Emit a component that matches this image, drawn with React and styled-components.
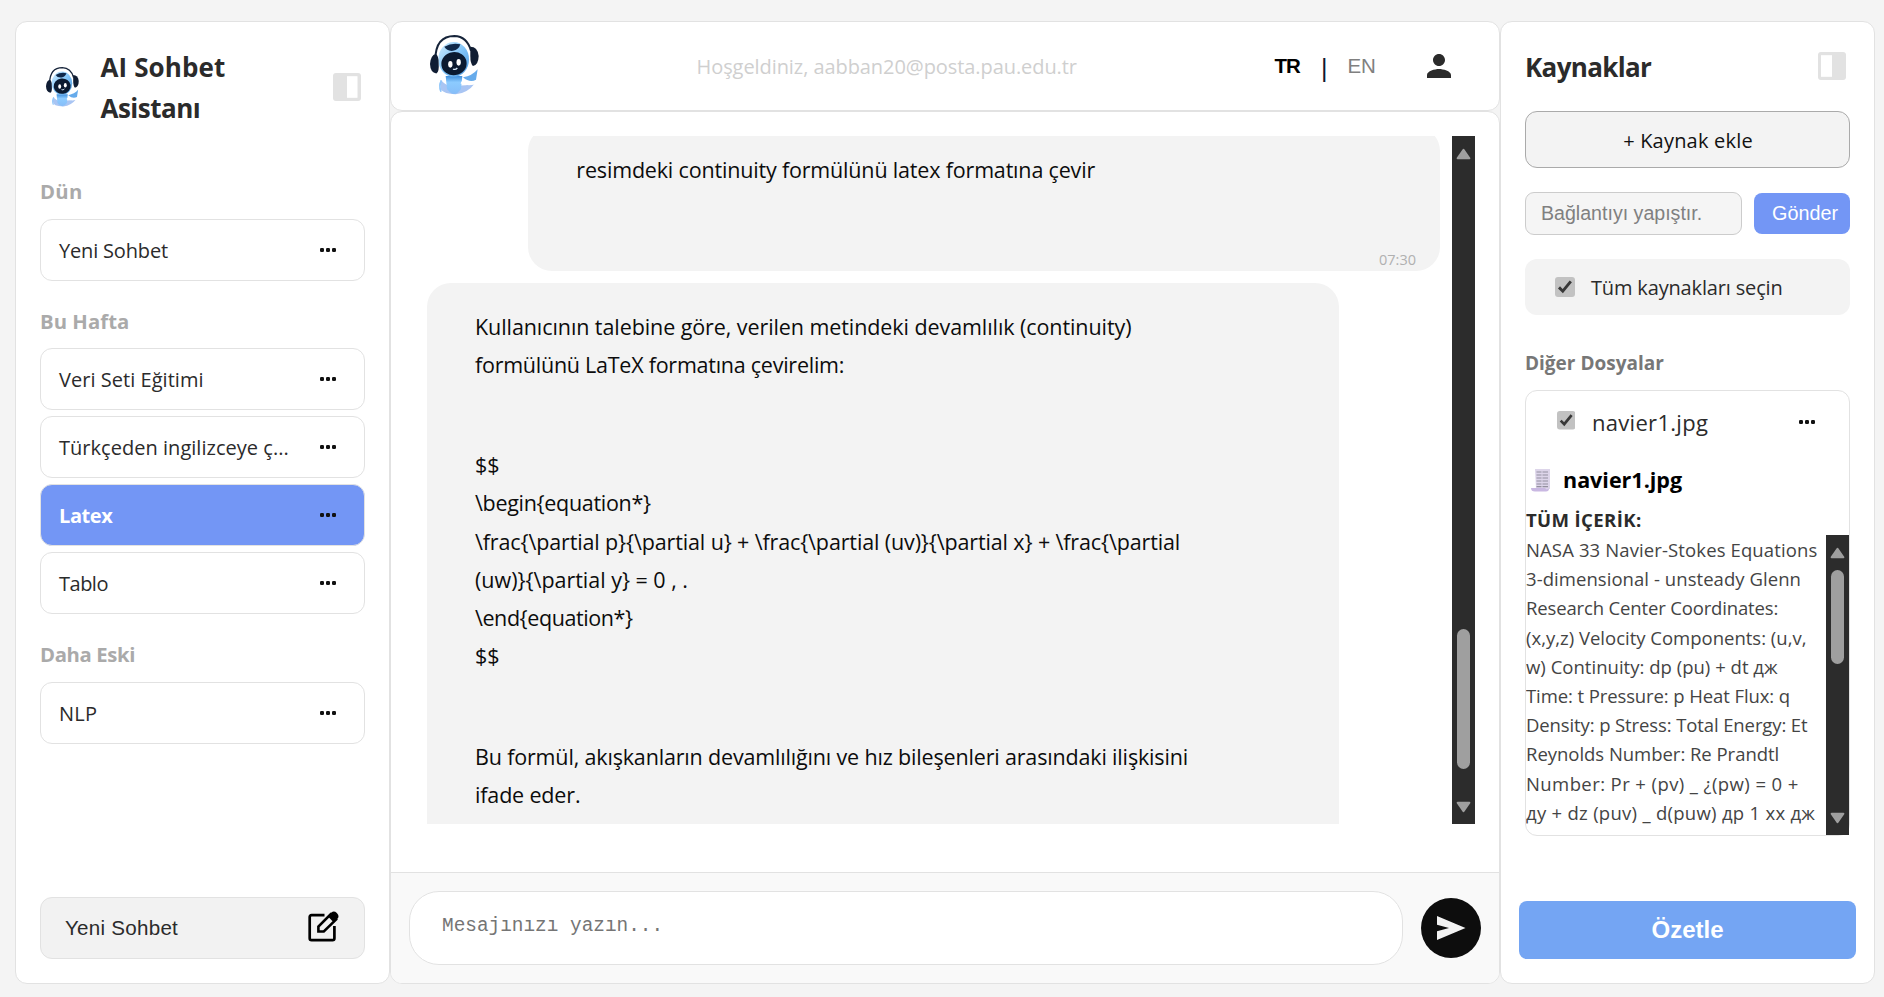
import React from "react";
import styled, { createGlobalStyle, css } from "styled-components";
import { MdPerson } from "react-icons/md";

const ui = `"Open Sans", "Noto Sans", sans-serif`;
const sans = `"Liberation Sans", Arial, sans-serif`;
const line = "#e2e2e2";

const GlobalStyle = createGlobalStyle`
  *, *::before, *::after { box-sizing: border-box; }
  body { margin: 0; background: #f4f4f4; font-family: ${ui}; color: #2b2b2b; }
  button, input { margin: 0; font: inherit; outline: none; }
`;

const Page = styled.div`
  display: flex;
  height: 997px;
  padding: 21px 9px 13px 15px;
  overflow: hidden;
`;

const card = css`
  background: #fff;
  border: 1px solid ${line};
  border-radius: 12px;
`;

const SidePanel = styled.aside`
  ${card}
  flex: none;
  width: 375px;
  display: flex;
  flex-direction: column;
  padding: 25px 24px 24px;
`;

const PanelHeader = styled.header`
  display: flex;
  align-items: ${(p) => p.$align || "center"};
`;

const PanelTitle = styled.h1`
  flex: 1;
  margin: 0 0 0 ${(p) => p.$left || 0}px;
  font-size: 26px;
  line-height: 40.5px;
  font-weight: 700;
`;

const Line = styled.span`
  display: block;
  white-space: nowrap;
  letter-spacing: ${(p) => p.$track || 0}px;
`;

const ToggleIcon = styled.svg`
  flex: none;
  width: 28px;
  height: 28px;
  margin: ${(p) => p.$top || 0}px 4px ${(p) => p.$bottom || 0}px 0;
`;

const RobotArt = styled.svg`
  flex: none;
  margin: 0 0 ${(p) => p.$bottom || 0}px ${(p) => p.$left || 0}px;
`;

const Group = styled.section`
  margin-top: ${(p) => p.$top || 26}px;
`;

const GroupLabel = styled.h2`
  margin: 0 0 13.5px;
  color: #aaa;
  font-size: 20.3px;
  line-height: 28px;
  font-weight: 700;
  letter-spacing: ${(p) => p.$track || 0}px;
`;

const ChatList = styled.div`
  display: flex;
  flex-direction: column;
  gap: 6px;
`;

const ChatItem = styled.div`
  ${card}
  height: 62px;
  display: flex;
  align-items: center;
  justify-content: space-between;
  padding: 0 28px 0 18px;
  font-size: 20px;
  white-space: nowrap;
  letter-spacing: ${(p) => p.$track || 0}px;
  ${(p) =>
    p.$active &&
    css`
      background: #7396f5;
      color: #fff;
      font-weight: 700;
    `}
`;

const ChatName = styled.span`
  padding-top: 1px;
`;

const NewChat = styled.button`
  height: 62px;
  margin-top: auto;
  display: flex;
  align-items: center;
  justify-content: space-between;
  padding: 0 25px 0 24px;
  border: 1px solid ${line};
  border-radius: 12px;
  background: #f2f2f2;
  color: #2b2b2b;
  font: 20.6px ${sans};
  letter-spacing: 0.25px;
`;

const ComposeArt = styled.svg`
  margin-bottom: 3px;
`;

const Main = styled.main`
  flex: none;
  width: 1110px;
  display: flex;
  flex-direction: column;
`;

const TopBar = styled.header`
  ${card}
  height: 90px;
  display: flex;
  align-items: center;
  padding: 0 42px 0 39px;
`;

const Welcome = styled.div`
  flex: 1;
  margin-left: 217.5px;
  color: #cfcfcf;
  font-size: 20px;
  letter-spacing: -0.07px;
`;

const Languages = styled.nav`
  display: flex;
  align-items: center;
  margin-right: 43.5px;
  font: 20.5px/24px ${sans};
`;

const Language = styled.span`
  width: ${(p) => p.$width}px;
  letter-spacing: ${(p) => p.$track}px;
  color: ${(p) => (p.$active ? "#000" : "#808080")};
  font-weight: ${(p) => (p.$active ? 700 : 400)};
`;

const Divider = styled.span`
  width: 26.5px;
  padding-top: 4px;
  font-size: 25px;
  color: #101830;
`;

const Body = styled.section`
  ${card}
  flex: 1;
  min-height: 0;
  display: flex;
  flex-direction: column;
  overflow: hidden;
`;

const Scroller = styled.div`
  flex: 1;
  min-height: 0;
  display: flex;
  gap: 12px;
  padding: 24px 24px 48px 36px;
`;

const Thread = styled.div`
  flex: 1;
  display: flex;
  flex-direction: column;
  gap: 12.5px;
  overflow: hidden;
`;

const Bubble = styled.article`
  flex: none;
  width: 90%;
  padding: 24.6px 24px 0 48px;
  border-radius: 24px;
  background: #f3f3f3;
  color: #0c0c0c;
  font-size: 21.5px;
  line-height: 38.25px;
  ${(p) =>
    p.$mine &&
    css`
      align-self: flex-end;
      height: 144px;
      margin-top: -9.5px;
      display: flex;
      flex-direction: column;
      justify-content: space-between;
      padding-bottom: 0.6px;
    `}
`;

const Paragraph = styled.p`
  margin: 0 0 62px;
`;

const Time = styled.time`
  align-self: flex-end;
  color: #b0b0b0;
  font-size: 14.5px;
  line-height: 20px;
`;

const Track = styled.div`
  flex: none;
  width: 23px;
  display: flex;
  flex-direction: column;
  align-items: center;
  padding: 12px 0 11px;
  background: #2c2c2c;
`;

const Thumb = styled.div`
  width: 13px;
  height: ${(p) => p.$height}px;
  margin: ${(p) => p.$before}px 0 auto;
  border-radius: 7px;
  background: #9f9f9f;
`;

const Composer = styled.form`
  display: flex;
  align-items: center;
  gap: 18px;
  height: 111px;
  padding: 0 18px;
  border-top: 1px solid ${line};
  background: #f9f9f9;
`;

const MessageInput = styled.input`
  flex: 1;
  height: 74px;
  padding: 0 32px 5px;
  border: 1px solid ${line};
  border-radius: 30px;
  background: #fff;
  font: 19.4px "Liberation Mono", monospace;
  &::placeholder { color: #757575; opacity: 1; }
`;

const SendButton = styled.button`
  width: 60px;
  height: 60px;
  display: flex;
  align-items: center;
  justify-content: center;
  padding: 0 0 0 1px;
  border: 0;
  border-radius: 50%;
  background: #0d0d0d;
`;

const AddSource = styled.button`
  flex: none;
  height: 57px;
  margin-top: 23.5px;
  padding: 1px 0 0 1px;
  border: 1px solid #aaa;
  border-radius: 12px;
  background: #f3f3f3;
  color: #111;
  font-size: 20px;
  letter-spacing: 0.2px;
`;

const LinkRow = styled.div`
  display: flex;
  align-items: center;
  gap: 12px;
  margin-top: 24px;
`;

const LinkInput = styled.input`
  width: 217px;
  height: 43px;
  padding: 0 14px 1px 15px;
  border: 1px solid #ccc;
  border-radius: 9px;
  background: #f5f5f5;
  font: 19.6px ${sans};
  &::placeholder { color: #808080; opacity: 1; }
`;

const LinkSend = styled.button`
  flex: 1;
  height: 41px;
  padding: 0 0 1px 6px;
  border: 0;
  border-radius: 8px;
  background: #7396f5;
  color: #fff;
  font: 19.8px ${sans};
`;

const SelectAll = styled.label`
  height: 56px;
  margin-top: 24px;
  display: flex;
  align-items: center;
  gap: 16px;
  padding: 0 30px;
  border-radius: 12px;
  background: #f3f3f3;
  font-size: 20px;
  letter-spacing: -0.16px;
`;

const Check = styled.svg`
  flex: none;
  width: ${(p) => p.$size}px;
  height: ${(p) => p.$size}px;
  margin-bottom: ${(p) => p.$bottom || 0}px;
`;

const FilesLabel = styled.h2`
  margin: 34px 0 13px;
  color: #777;
  font-size: 19px;
  line-height: 28px;
  font-weight: 700;
`;

const FileCard = styled.section`
  ${card}
  height: 446px;
  display: flex;
  flex-direction: column;
`;

const FileRow = styled.div`
  display: flex;
  align-items: center;
  gap: 17px;
  padding: 16px 34px 0 30.5px;
  line-height: 30px;
  font-size: 22px;
  letter-spacing: 0.3px;
`;

const FileName = styled.span`
  flex: 1;
`;

const FileTitle = styled.h3`
  display: flex;
  align-items: center;
  gap: 12px;
  margin: 27.5px 0 0 5px;
  color: #000;
  font-size: 21.5px;
  line-height: 30px;
  font-weight: 700;
`;

const ContentLabel = styled.h4`
  margin: 10.5px 0 1px;
  color: #2b2b2b;
  font-size: 18.6px;
  line-height: 29px;
  font-weight: 700;
  letter-spacing: 0.35px;
`;

const ContentArea = styled.div`
  flex: 1;
  min-height: 0;
  display: flex;
`;

const ContentText = styled.div`
  flex: 1;
  overflow: hidden;
  color: #444;
  font-size: 18.5px;
  line-height: 29.2px;
`;

const Summarize = styled.button`
  flex: none;
  height: 58px;
  margin: auto -6px 0;
  border: 0;
  border-radius: 8px;
  background: #74a5f3;
  color: #fff;
  padding: 0 0 1px;
  font: 700 24px ${sans};
`;

function Robot({ width, height, left, bottom }) {
  return (
    <RobotArt width={width} height={height} $left={left} $bottom={bottom} viewBox="15 14 147 182" preserveAspectRatio="none">
      <defs>
        <linearGradient id="shell" x1="0" y1="0" x2="1" y2="1">
          <stop offset="0" stopColor="#d3efff" />
          <stop offset="0.5" stopColor="#83c5f8" />
          <stop offset="1" stopColor="#4d98de" />
        </linearGradient>
        <linearGradient id="torso" x1="0" y1="0" x2="0" y2="1">
          <stop offset="0" stopColor="#3f8edb" />
          <stop offset="0.35" stopColor="#8ccbff" />
          <stop offset="1" stopColor="#86bdf8" />
        </linearGradient>
      </defs>
      <path d="M46 150 Q60 163 66 166 Q110 172 150 160 Q128 190 92 194 Q46 192 46 172 Z" fill="#a9c5f3" />
      <path d="M50 152 Q40 166 48 186" fill="none" stroke="#8fc6fa" strokeWidth="5" />
      <path d="M62 138 H112 L108 178 Q88 208 66 178 Z" fill="url(#torso)" />
      <path d="M114 142 Q142 138 158 118 L153 150 Q134 160 114 142 Z" fill="#66abeb" />
      <path d="M108 158 Q132 168 158 158" stroke="#fff" strokeWidth="7" fill="none" />
      <ellipse cx="86" cy="88" rx="46" ry="53" fill="url(#shell)" />
      <path d="M31 88 Q32 17 88 17 Q126 18 138 62" fill="none" stroke="#16243a" strokeWidth="6" />
      <path d="M58 50 Q80 36 106 42 Q102 58 84 62 Q66 64 58 50 Z" fill="#10294b" />
      <ellipse cx="87" cy="101" rx="38" ry="35" fill="#0b1a30" transform="rotate(-8 87 101)" />
      <ellipse cx="76" cy="103" rx="6.5" ry="10" fill="#fff" />
      <ellipse cx="101" cy="97" rx="6.5" ry="10" fill="#fff" />
      <path d="M84 117 Q91 121 97 114" fill="none" stroke="#dceeff" strokeWidth="4" />
      <path d="M32 72 Q17 76 15 102 Q16 128 34 131 Q43 128 41 100 Q41 76 32 72 Z" fill="#101d33" />
      <path d="M136 50 Q158 50 161 78 Q160 106 144 108 Q136 102 136 78 Z" fill="#101d33" />
    </RobotArt>
  );
}

function PanelToggle({ side, top, bottom }) {
  return (
    <ToggleIcon viewBox="0 0 28 28" $top={top} $bottom={bottom}>
      <rect width="28" height="28" rx="3" fill={line} />
      <rect x={side === "left" ? 14 : 3} y="3.2" width={side === "left" ? 10.5 : 11} height="21.6" fill="#fff" />
    </ToggleIcon>
  );
}

function Dots() {
  return (
    <svg width="16" height="4" viewBox="0 0 16 4">
      {[0, 6, 12].map((x) => (
        <rect key={x} x={x} width="4" height="4" rx="1.2" fill="#111" />
      ))}
    </svg>
  );
}

function Checkbox({ size, bottom }) {
  return (
    <Check viewBox="0 0 20 20" $size={size} $bottom={bottom}>
      <rect width="20" height="20" rx="3" fill="#c2c2c2" />
      <path d="M4 10.4 L7.8 14.2 L15.8 4.4" fill="none" stroke="#383838" strokeWidth="2.9" />
    </Check>
  );
}

function Compose() {
  return (
    <ComposeArt width="31" height="31" viewBox="0 0 31 31" fill="none" stroke="#000">
      <path d="M16.5 4.2 H3.6 Q1.7 4.2 1.7 6.1 V27.3 Q1.7 29.2 3.6 29.2 H24.6 Q26.4 29.2 26.4 27.3 V15" strokeWidth="2.7" />
      <path d="M10.4 20.5 V15.6 L22.6 3.4 L28 8.6 L15.8 20.5 Z" strokeWidth="2.6" />
      <path d="M19.8 5.2 L23.4 1.6 Q25.9 -0.6 28.8 2 Q31.8 5 29.6 7.6 L25.8 11.4 Z" fill="#000" stroke="none" />
    </ComposeArt>
  );
}

function Arrow({ down }) {
  return (
    <svg width="15" height="12" viewBox="0 0 15 12">
      <path
        d="M7.5 1.8 L13.4 10.2 H1.6 Z"
        fill="#9f9f9f"
        stroke="#9f9f9f"
        strokeWidth="2"
        strokeLinejoin="round"
        transform={down ? "rotate(180 7.5 6)" : undefined}
      />
    </svg>
  );
}

function ScrollTrack({ before, height }) {
  return (
    <Track>
      <Arrow />
      <Thumb $before={before} $height={height} />
      <Arrow down />
    </Track>
  );
}

function Scroll() {
  return (
    <svg width="20" height="24" viewBox="0 0 20 24">
      <path d="M4 1 H19 V21 H5 Z" fill="#ddd5ea" />
      <path d="M0 20 H14 Q15 22 18 20.5 Q18 23.5 15 23.5 H4 Q0 23.5 0 20 Z" fill="#c9b8e2" />
      {[3, 6, 9, 12, 15, 17.6].map((y) => (
        <path key={y} d={`M5.5 ${y + 1} H10.5 M11.5 ${y + 1} H17`} stroke="#94909f" strokeWidth="1.1" />
      ))}
    </svg>
  );
}

const groups = [
  { label: "Dün", track: 0.3, top: 49.4, chats: [{ name: "Yeni Sohbet", track: -0.17 }] },
  {
    label: "Bu Hafta",
    track: 0.05,
    chats: [
      { name: "Veri Seti Eğitimi", track: 0.04 },
      { name: "Türkçeden ingilizceye ç...", track: 0.03 },
      { name: "Latex", track: -0.4, active: true },
      { name: "Tablo", track: -0.5 },
    ],
  },
  { label: "Daha Eski", track: -0.35, chats: [{ name: "NLP", track: 0.3 }] },
];

const reply = [
  [
    ["Kullanıcının talebine göre, verilen metindeki devamlılık (continuity)", -0.08],
    ["formülünü LaTeX formatına çevirelim:", -0.25],
  ],
  [
    ["$$", 0],
    ["\\begin{equation*}", -0.31],
    ["\\frac{\\partial p}{\\partial u} + \\frac{\\partial (uv)}{\\partial x} + \\frac{\\partial", -0.13],
    ["(uw)}{\\partial y} = 0 , .", -0.02],
    ["\\end{equation*}", -0.42],
    ["$$", 0],
  ],
  [
    ["Bu formül, akışkanların devamlılığını ve hız bileşenleri arasındaki ilişkisini", -0.165],
    ["ifade eder.", -0.16],
  ],
];

const content = [
  ["NASA 33 Navier-Stokes Equations", 0.12],
  ["3-dimensional - unsteady Glenn", 0.06],
  ["Research Center Coordinates:", -0.15],
  ["(x,y,z) Velocity Components: (u,v,", 0],
  ["w) Continuity: dp (pu) + dt дж", 0.02],
  ["Time: t Pressure: p Heat Flux: q", -0.1],
  ["Density: p Stress: Total Energy: Et", -0.11],
  ["Reynolds Number: Re Prandtl", -0.03],
  ["Number: Pr + (pv) _ ¿(pw) = 0 +", 0.41],
  ["ду + dz (puv) _ d(puw) др 1 xx дж", 0.28],
  ["xx dy d", 0],
];

export default function App() {
  return (
    <Page>
      <GlobalStyle />
      <SidePanel>
        <PanelHeader>
          <Robot width={33} height={40} left={6} bottom={2} />
          <PanelTitle $left={21.5}>
            <Line $track={0.12}>AI Sohbet</Line>
            <Line $track={-0.5}>Asistanı</Line>
          </PanelTitle>
          <PanelToggle side="left" bottom={1} />
        </PanelHeader>
        {groups.map((g) => (
          <Group key={g.label} $top={g.top}>
            <GroupLabel $track={g.track}>{g.label}</GroupLabel>
            <ChatList>
              {g.chats.map((c) => (
                <ChatItem key={c.name} $active={c.active} $track={c.track}>
                  <ChatName>{c.name}</ChatName>
                  <Dots />
                </ChatItem>
              ))}
            </ChatList>
          </Group>
        ))}
        <NewChat>
          Yeni Sohbet
          <Compose />
        </NewChat>
      </SidePanel>

      <Main>
        <TopBar>
          <Robot width={49} height={60} bottom={2} />
          <Welcome>Hoşgeldiniz, aabban20@posta.pau.edu.tr</Welcome>
          <Languages>
            <Language $active $width={46.5} $track={-1}>TR</Language>
            <Divider>|</Divider>
            <Language $width={30} $track={-0.2}>EN</Language>
          </Languages>
          <MdPerson size={36} color="#2b2b2b" />
        </TopBar>
        <Body>
          <Scroller>
            <Thread>
              <Bubble $mine>
                <Line $track={-0.175}>resimdeki continuity formülünü latex formatına çevir</Line>
                <Time>07:30</Time>
              </Bubble>
              <Bubble>
                {reply.map((lines, i) => (
                  <Paragraph key={i}>
                    {lines.map(([text, track], j) => (
                      <Line key={j} $track={track}>{text}</Line>
                    ))}
                  </Paragraph>
                ))}
              </Bubble>
            </Thread>
            <ScrollTrack before={469} height={140} />
          </Scroller>
          <Composer>
            <MessageInput placeholder="Mesajınızı yazın..." />
            <SendButton type="button">
              <svg width="29" height="24" viewBox="0 0 29 24">
                <path d="M0 0 L28.5 12 L0 24 V15.2 L12 12 L0 8.8 Z" fill="#f2f2f2" />
              </svg>
            </SendButton>
          </Composer>
        </Body>
      </Main>

      <SidePanel>
        <PanelHeader $align="flex-start">
          <PanelTitle>
            <Line $track={-0.65}>Kaynaklar</Line>
          </PanelTitle>
          <PanelToggle side="right" top={5} />
        </PanelHeader>
        <AddSource>+ Kaynak ekle</AddSource>
        <LinkRow>
          <LinkInput placeholder="Bağlantıyı yapıştır." />
          <LinkSend>Gönder</LinkSend>
        </LinkRow>
        <SelectAll>
          <Checkbox size={20} />
          Tüm kaynakları seçin
        </SelectAll>
        <FilesLabel>Diğer Dosyalar</FilesLabel>
        <FileCard>
          <FileRow>
            <Checkbox size={18.5} bottom={3} />
            <FileName>navier1.jpg</FileName>
            <Dots />
          </FileRow>
          <FileTitle>
            <Scroll />
            navier1.jpg
          </FileTitle>
          <ContentLabel>TÜM İÇERİK:</ContentLabel>
          <ContentArea>
            <ContentText>
              {content.map(([text, track]) => (
                <Line key={text} $track={track}>{text}</Line>
              ))}
            </ContentText>
            <ScrollTrack before={11} height={94} />
          </ContentArea>
        </FileCard>
        <Summarize>Özetle</Summarize>
      </SidePanel>
    </Page>
  );
}
